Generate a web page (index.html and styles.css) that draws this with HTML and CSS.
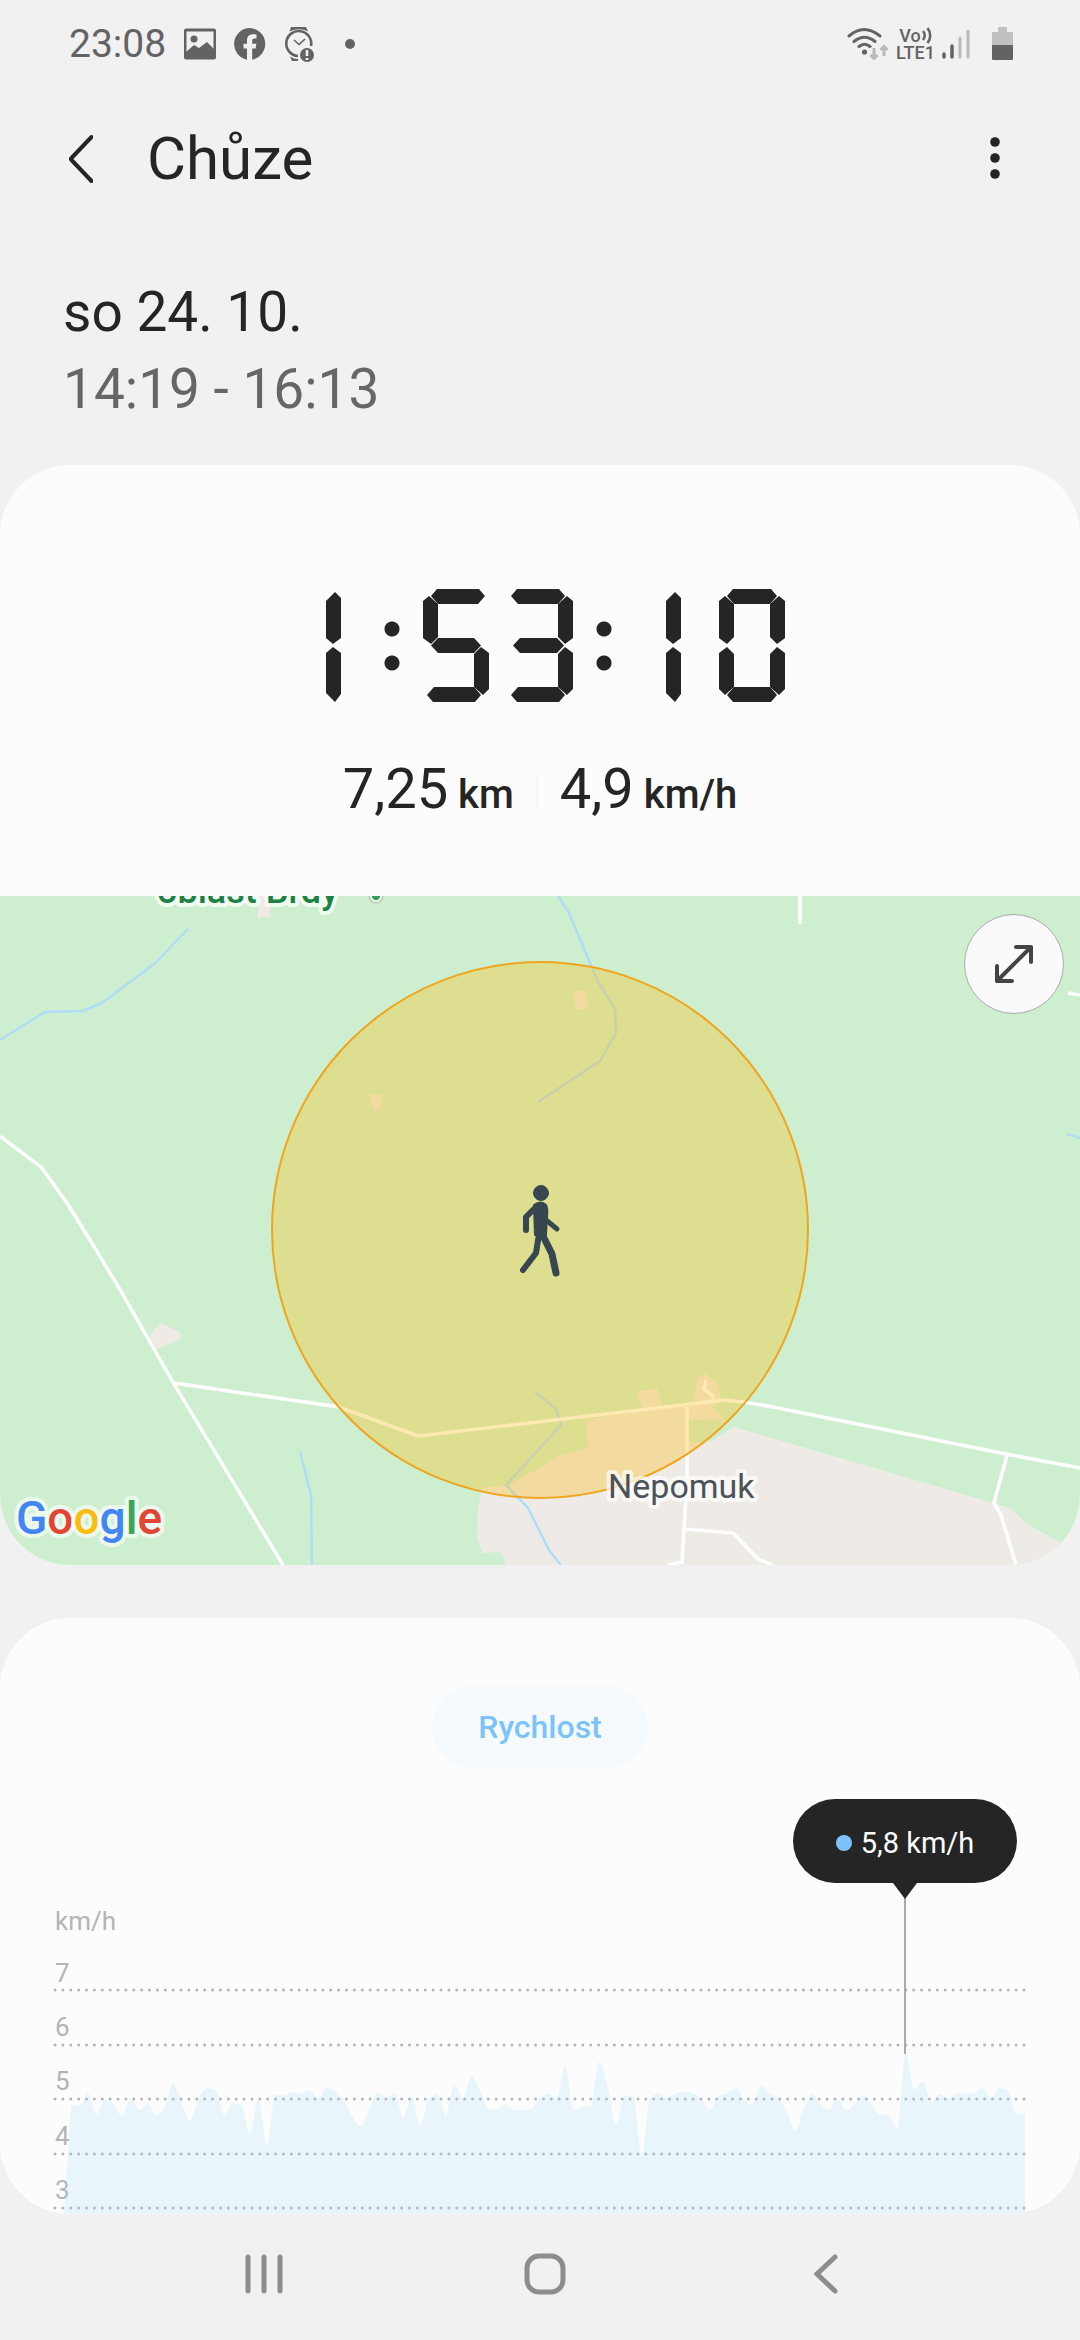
FILE: index.html
```html
<!DOCTYPE html>
<html lang="cs">
<head>
<meta charset="utf-8">
<meta name="viewport" content="width=device-width, initial-scale=1">
<title>Chůze</title>
<link rel="stylesheet" href="styles.css">
</head>
<body>
<div class="screen">
  <div class="status">
    <span class="clock">23:08</span>
    <svg class="status-icon" width="32" height="32" viewBox="0 0 32 32" aria-hidden="true">
      <rect x="1" y="2" width="30" height="28" rx="2" fill="none" stroke="#636363" stroke-width="3"/>
      <circle cx="10" cy="11" r="3.500" fill="#636363"/>
      <path d="M2 24L10 17L15 20L23 14L30 21V30H2Z" fill="#636363"/>
    </svg>
    <svg class="status-icon" width="32" height="32" viewBox="0 0 32 32" aria-hidden="true">
      <path fill="#636363" d="M16 0a16 16 0 0 0-3 31.700V20.500H9.500V15.700H13V12.500C13 8.500 15.400 6.300 19 6.300c1.500 0 3.500.3 3.500.3v4h-2c-2 0-2.300 1.200-2.300 2.400v2.700h4.200l-.8 4.800h-3.400v11.200A16 16 0 0 0 16 0Z"/>
    </svg>
    <svg class="status-icon" width="32" height="36" viewBox="0 0 32 36" aria-hidden="true">
      <path d="M7 1H22L24 5.500Q15 1 5.500 5.500ZM6 30.500Q9.500 33 14 33V35H8Z" fill="#636363"/>
      <path d="M27 20A12.500 12.500 0 1 0 14 30" fill="none" stroke="#636363" stroke-width="2.600"/>
      <path d="M10 14L15 18.500L21 13" fill="none" stroke="#636363" stroke-width="1.600"/>
      <circle cx="23" cy="29" r="7" fill="#636363"/>
      <path d="M23 24V30M23 32V34" stroke="#f1f1f1" stroke-width="2.600"/>
    </svg>
    <span class="more-dot"></span>
    <span class="status-space"></span>
    <svg class="wifi" width="42" height="34" viewBox="0 0 42 34" aria-hidden="true">
      <g fill="none" stroke="#636363" stroke-width="3" stroke-linecap="round">
        <path d="M2 9Q17 -4 33 9M7 14.500Q17.500 6 28 14.500M12 19.500Q17.500 15 23 19.500"/>
      </g>
      <circle cx="17.500" cy="25" r="2.600" fill="#636363"/>
      <path d="M27 21V31M23.500 28L27 31.500L30.500 28M37 29V19.500M33.500 23L37 19.500L40.500 23" fill="none" stroke="#b9b9b9" stroke-width="3"/>
    </svg>
    <span class="volte">
      <span class="vo">Vo<svg width="10" height="17" viewBox="0 0 10 17" aria-hidden="true"><path d="M1 4Q4.500 8.500 1 13M5.500 1Q11 8.500 5.500 16" fill="none" stroke="#636363" stroke-width="2.500"/></svg></span>
      <span>LTE1</span>
    </span>
    <svg class="signal" width="28" height="32" viewBox="0 0 28 32" aria-hidden="true">
      <g stroke-width="3" stroke-linecap="round"><path d="M2 26V29M10 18V29" stroke="#636363" stroke-width="3.500"/><path d="M18 10V29M26 3V29" stroke="#bababa"/></g>
    </svg>
    <svg class="battery" width="21" height="34" viewBox="0 0 21 34" aria-hidden="true">
      <path d="M6 0H15V5H20Q21 5 21 6V18H0V6Q0 5 1 5H6Z" fill="#c0c0c0"/>
      <path d="M0 18H21V32Q21 33 20 33H1Q0 33 0 32Z" fill="#636363"/>
    </svg>
  </div>

  <header class="appbar">
    <button class="icon-button" type="button" aria-label="Zpět">
      <svg width="24" height="50" viewBox="0 0 24 50"><path d="M22.500 3L2.500 24Q1.500 25 2.500 26L22.500 47" fill="none" stroke="#252525" stroke-width="4" stroke-linecap="round"/></svg>
    </button>
    <h1>Chůze</h1>
    <button class="icon-button" type="button" aria-label="Další možnosti">
      <svg width="10" height="44" viewBox="0 0 10 44"><g fill="#252525"><circle cx="5" cy="5" r="4.800"/><circle cx="5" cy="21" r="4.800"/><circle cx="5" cy="37" r="4.800"/></g></svg>
    </button>
  </header>

  <section class="when">
    <p>so 24. 10.</p>
    <p class="hours">14:19 - 16:13</p>
  </section>

  <main>
    <section class="card summary">
      <div class="timer" role="timer" aria-label="1:53:10">
        <span class="digit one">1<i class="b"></i><i class="c"></i></span>
        <span class="colon">:</span>
        <span class="digit five">5<i class="a"></i><i class="f"></i><i class="g"></i><i class="c"></i><i class="d"></i></span>
        <span class="digit three">3<i class="a"></i><i class="b"></i><i class="g"></i><i class="c"></i><i class="d"></i></span>
        <span class="colon">:</span>
        <span class="digit one">1<i class="b"></i><i class="c"></i></span>
        <span class="digit">0<i class="a"></i><i class="b"></i><i class="c"></i><i class="d"></i><i class="e"></i><i class="f"></i></span>
      </div>
      <div class="stats">
        <span class="stat"><b>7,25</b> km</span>
        <span class="divider"></span>
        <span class="stat"><b>4,9</b> km/h</span>
      </div>
      <div class="map">
        <svg class="map-canvas" viewBox="0 0 1080 669" role="img" aria-label="Mapa">
          <rect width="1080" height="669" fill="#ceefcf"/>
          <g fill="#eeebe6">
            <path d="M258 0H271L270 22L263 21L258 23Z"/>
            <path d="M160 427L150 438V444L157 453L181 443L180 436Z"/>
            <path d="M369 198L382 199L381 213L374 215Z"/>
            <path d="M573 96L585 94L589 112L576 114Z"/>
            <path d="M506 669L504 661L499 656L483 657L477 642L478 611L483 591L507 590L560 560L588 551L586 527L589 524L643 513L636 496L657 492L663 511L692 508L698 481L706 477L719 489L720 505L713 511L726 526L706 523L688 525L689 546L710 546L734 531L847 564L1010 612L1027 628L1062 647L1080 655V669Z"/>
          </g>
          <g fill="none" stroke="#b0dcf6" stroke-width="2.500">
            <path d="M0 144L45 116L83 115L102 107L154 68L188 33"/>
            <path d="M300 556L311 599L312 669"/>
            <path d="M558 0L569 17L590 67L597 84L615 113L616 137L600 165L538 206"/>
            <path d="M1067 238L1080 242"/>
            <path d="M535 496L556 513L561 529L506 589L528 612L549 654L561 669"/>
          </g>
          <g fill="none" stroke="#fff" stroke-width="3.500">
            <path d="M0 240L41 271L67 307L90 344L119 392L174 488L283 669"/>
            <path d="M174 487L339 511L418 540L725 504L744 506L773 511L1006 558L1080 572"/>
            <path d="M800 0V28M1068 97L1080 99"/>
            <path d="M687 511L687 584L682 666L668 669M684 633L733 637L758 663L772 669M1007 559L994 607L1001 619L1016 669"/>
            <path d="M706 484L704 493L713 500V505"/>
          </g>
          <circle cx="540" cy="334" r="268" fill="#ffb500" fill-opacity=".3" stroke="#efa51f" stroke-width="2"/>
          <circle cx="376" cy="0" r="7" fill="#fff" stroke="#c3dcc5" stroke-width="3"/>
          <circle cx="376" cy="0" r="4" fill="#2f9e57"/>
          <text class="label park" x="157" y="7">oblast Brdy</text>
          <text class="label town" x="608" y="602">Nepomuk</text>
          <g fill="#37474f" stroke="#37474f" stroke-linecap="round" stroke-linejoin="round">
            <circle cx="541" cy="297" r="7.500"/>
            <path d="M534 309Q541 304 546 309Q548 313 547 321L546 339H535Z" stroke-width="2"/>
            <path fill="none" stroke-width="6" d="M536 311L526 321L526 334"/>
            <path fill="none" stroke-width="5" d="M546 324L557 333"/>
            <path fill="none" stroke-width="6" d="M539 338L536 357L523 374"/>
            <path fill="none" stroke-width="7" d="M542 338L552 358L556 377"/>
          </g>
          <text class="logo" x="16" y="638"><tspan fill="#4285f4">G</tspan><tspan fill="#e24536">o</tspan><tspan fill="#f8bd10">o</tspan><tspan fill="#4285f4">g</tspan><tspan fill="#3aa757">l</tspan><tspan fill="#e24536">e</tspan></text>
        </svg>
        <button class="expand" type="button" aria-label="Zvětšit mapu">
          <svg width="40" height="40" viewBox="0 0 40 40"><path d="M3 37L37 3M22 3H37V18M3 22V37H18" fill="none" stroke="#444" stroke-width="4" stroke-linecap="round" stroke-linejoin="round"/></svg>
        </button>
      </div>
    </section>

    <section class="card speed">
      <button class="chip" type="button">Rychlost</button>
      <div class="chart">
        <svg class="plot" viewBox="0 0 1080 446" role="img" aria-label="Graf rychlosti v km/h">
          <g class="axis">
            <text x="55" y="162">km/h</text>
            <text x="55" y="214">7</text>
            <text x="55" y="268">6</text>
            <text x="55" y="322">5</text>
            <text x="55" y="377">4</text>
            <text x="55" y="431">3</text>
          </g>
          <g class="grid">
            <path pathLength="123" d="M55 222H1024"/>
            <path pathLength="123" d="M55 277H1024"/>
            <path pathLength="123" d="M55 331H1024"/>
            <path pathLength="123" d="M55 386H1024"/>
            <path pathLength="123" d="M55 440H1024"/>
          </g>
          <path id="area" class="area"/>
          <path class="marker" d="M905 130V286"/>
        </svg>
        <div class="tooltip"><span class="key"></span>5,8 km/h</div>
      </div>
    </section>
  </main>

  <nav class="navbar" aria-label="Systémová navigace">
    <button type="button" aria-label="Poslední aplikace"><svg width="42" height="42" viewBox="0 0 42 42"><path d="M5 4V38M21 4V38M37 4V38"/></svg></button>
    <button type="button" aria-label="Domů"><svg width="42" height="42" viewBox="0 0 42 42"><rect x="3" y="3" width="36" height="36" rx="12"/></svg></button>
    <button type="button" aria-label="Zpět"><svg width="42" height="42" viewBox="0 0 42 42"><path d="M30 4L12 21L30 38"/></svg></button>
  </nav>
</div>
<script src="chart.js"></script>
</body>
</html>
```
FILE: styles.css
```css
* { box-sizing: border-box; }

body {
  margin: 0;
  background: #f1f1f1;
  color: #252525;
  font-family: Roboto, "Noto Sans", sans-serif;
}

h1, p { margin: 0; font-weight: 400; }

button {
  margin: 0;
  padding: 0;
  border: 0;
  background: none;
  font: inherit;
  color: inherit;
}

svg { display: block; flex: none; }

.screen { display: flex; flex-direction: column; min-height: 100vh; }

/* Status bar */
.status {
  display: flex;
  align-items: center;
  height: 88px;
  padding: 0 67px 0 69px;
  color: #636363;
}
.clock { font-size: 39px; }
.status-icon { margin-left: 18px; }
.more-dot {
  width: 10px;
  height: 10px;
  margin-left: 29px;
  border-radius: 50%;
  background: #636363;
}
.status-space { flex: 1; }
.volte {
  display: flex;
  flex-direction: column;
  align-items: center;
  margin-left: 7px;
  font-size: 18px;
  font-weight: 500;
  line-height: 17px;
}
.vo { display: flex; gap: 1px; }
.signal { margin-left: 7px; }
.battery { margin-left: 22px; }

/* App bar */
.appbar {
  display: flex;
  align-items: center;
  height: 142px;
  padding: 0 80px 0 69px;
}
.appbar h1 {
  flex: 1;
  margin-left: 54px;
  font-size: 60px;
  line-height: 72px;
}

.when {
  padding: 44px 63px 37px;
  font-size: 55px;
  line-height: 77px;
}
.hours { color: #666; }

.card { border-radius: 70px; background: #fcfcfc; }

/* Summary card */
.summary { overflow: hidden; padding-top: 124px; }

.timer { display: flex; justify-content: center; }
.digit, .colon {
  position: relative;
  height: 113px;
  font-size: 100px;
  line-height: 113px;
  text-align: center;
  color: transparent;
}
.digit { width: 66px; }
.digit + .digit { margin-left: 18px; }
.colon {
  width: 62px;
  background:
    radial-gradient(circle at 31px 40px, #252525 7px, transparent 8px),
    radial-gradient(circle at 31px 74px, #252525 7px, transparent 8px);
}
.digit i { position: absolute; background: #252525; }

.a, .d, .g { left: 8px; width: 50px; height: 15px; }
.a {
  top: 0;
  clip-path: polygon(0 7px, 6px 0, calc(100% - 6px) 0, 100% 7px, calc(100% - 7px) 15px, 7px 15px);
}
.d {
  top: 98px;
  clip-path: polygon(0 8px, 7px 0, calc(100% - 7px) 0, 100% 8px, calc(100% - 6px) 15px, 6px 15px);
}
.g {
  top: 49px;
  clip-path: polygon(0 50%, 7px 0, calc(100% - 7px) 0, 100% 50%, calc(100% - 7px) 100%, 7px 100%);
}
.b, .c, .e, .f { width: 15px; height: 48px; }
.b, .f { top: 7px; }
.c, .e { top: 58px; }
.b, .c { left: 51px; }
.e, .f { left: 0; }
.b { clip-path: polygon(9px 0, 15px 5px, 15px 42px, 7px 48px, 0 41px, 0 8px); }
.f { clip-path: polygon(6px 0, 15px 8px, 15px 41px, 8px 48px, 0 42px, 0 5px); }
.c { clip-path: polygon(7px 0, 15px 6px, 15px 42px, 9px 48px, 0 40px, 0 7px); }
.e { clip-path: polygon(8px 0, 15px 7px, 15px 40px, 6px 48px, 0 42px, 0 6px); }

.five .a { width: 54px; }
.five .d, .three .a, .three .d { left: 4px; width: 54px; }
.three .g { left: 6px; width: 51px; }
.one .b, .one .c { left: 31px; }
.one .b {
  top: 3px;
  height: 52px;
  clip-path: polygon(9px 0, 15px 6px, 15px 46px, 7px 52px, 0 46px, 0 9px);
}
.one .c {
  height: 55px;
  clip-path: polygon(7px 0, 15px 6px, 15px 47px, 9px 55px, 0 46px, 0 6px);
}

.stats {
  display: flex;
  justify-content: center;
  align-items: center;
  gap: 22px;
  height: 68px;
  margin: 56px 0 70px;
}
.stat {
  display: flex;
  align-items: baseline;
  gap: 10px;
  font-size: 40px;
  font-weight: 500;
  line-height: 56px;
}
.stat b { font-size: 56px; font-weight: 400; }
.divider { width: 2px; height: 34px; background: #f5f5f5; }

/* Map */
.map { position: relative; }
.map-canvas { width: 100%; height: auto; }
.label { stroke: #fff; stroke-opacity: .7; stroke-linejoin: round; paint-order: stroke; }
.park { font-size: 36px; font-weight: 500; fill: #1e8043; stroke-width: 8px; }
.town { font-size: 34px; fill: #4c5359; stroke-width: 8px; }
.logo {
  font-size: 46px;
  font-weight: 500;
  stroke: #fff;
  stroke-opacity: .6;
  stroke-width: 8px;
  stroke-linejoin: round;
  paint-order: stroke;
}
.expand {
  position: absolute;
  top: 18px;
  right: 16px;
  display: grid;
  place-items: center;
  width: 100px;
  height: 100px;
  border: 1px solid #a9aca9;
  border-radius: 50%;
  background: #fafafa;
}

/* Speed card */
.speed {
  display: flex;
  flex-direction: column;
  align-items: center;
  margin-top: 53px;
  padding-top: 68px;
  overflow: hidden;
}
.chip {
  height: 82px;
  padding: 0 46px;
  border-radius: 41px;
  background: #f5fafe;
  color: #7cc2fc;
  font-size: 32px;
  font-weight: 500;
}
.chart { position: relative; width: 100%; }
.plot { width: 100%; height: auto; }
.axis { font-size: 26px; fill: #b4b4b4; }
.grid { fill: none; stroke: #b4b4b4; stroke-width: 3px; stroke-linecap: round; stroke-dasharray: 0 1; }
.area { fill: #9de3ff; fill-opacity: .2; }
.marker { stroke: #aaa; stroke-width: 2px; }
.tooltip {
  position: absolute;
  top: 31px;
  right: 63px;
  display: flex;
  align-items: center;
  justify-content: center;
  gap: 9px;
  width: 224px;
  height: 84px;
  padding-top: 4px;
  border-radius: 42px;
  background: #252525;
  color: #fff;
  font-size: 29px;
}
.tooltip::after {
  content: "";
  position: absolute;
  top: 100%;
  left: calc(50% - 12px);
  border: 12px solid transparent;
  border-top: 16px solid #252525;
  border-bottom: 0;
}
.key { width: 16px; height: 16px; border-radius: 50%; background: #7cc2fc; }

/* System navigation */
.navbar {
  display: flex;
  height: 126px;
  padding: 0 114px 6px 123px;
}
.navbar button { flex: 1; display: grid; place-items: center; }
.navbar svg { fill: none; stroke: #8d8d8d; stroke-width: 5px; stroke-linecap: round; }
```
FILE: chart.js
```js
// Speed in km/h, one sample per minute.
const speeds = [
  4.89, 4.88, 5.10, 4.72, 4.99, 4.91, 4.68, 5.00, 4.80, 4.91,
  4.71, 4.83, 5.30, 4.91, 4.61, 5.02, 5.20, 5.16, 4.70, 4.92,
  4.89, 4.37, 5.01, 4.16, 5.08, 5.07, 5.13, 5.10, 5.16, 5.01,
  5.20, 5.15, 4.98, 4.68, 4.50, 4.80, 5.13, 5.01, 5.12, 4.65,
  5.04, 4.50, 4.99, 5.10, 4.70, 5.27, 5.01, 5.41, 5.17, 4.82,
  4.81, 4.91, 4.79, 4.80, 4.81, 5.02, 5.10, 5.00, 5.59, 4.80,
  4.86, 4.87, 5.68, 5.23, 4.50, 5.06, 5.06, 3.94, 5.02, 5.10,
  5.02, 5.10, 5.14, 5.11, 4.99, 4.80, 5.05, 5.10, 5.20, 5.00,
  4.90, 5.26, 5.11, 5.01, 4.80, 4.41, 4.80, 5.10, 4.90, 4.80,
  5.00, 4.80, 4.90, 5.05, 4.91, 4.71, 4.70, 4.43, 5.83, 5.17,
  5.32, 4.94, 5.10, 5.01, 5.10, 5.10, 5.10, 5.20, 5.01, 5.20,
  5.16, 4.73, 4.73
];

const left = 71, right = 1025, bottom = 446;
const step = (right - left) / (speeds.length - 1);
const points = speeds.map((v, i) => [left + i * step, 331 - (v - 5) * 54.6]);

// Monotone slopes keep the peaks at the samples.
const slope = points.map((p, i) => {
  if (i === 0 || i === points.length - 1) return 0;
  const before = p[1] - points[i - 1][1];
  const after = points[i + 1][1] - p[1];
  return before * after <= 0 ? 0 : (2 * before * after) / (before + after);
});

let d = `M64 ${bottom}L${points[0][0]} ${points[0][1]}`;
for (let i = 1; i < points.length; i++) {
  const [x0, y0] = points[i - 1];
  const [x1, y1] = points[i];
  d += `C${x0 + step / 3} ${y0 + slope[i - 1] / 3} ${x1 - step / 3} ${y1 - slope[i] / 3} ${x1} ${y1}`;
}
document.getElementById("area").setAttribute("d", `${d}V${bottom}Z`);
```
